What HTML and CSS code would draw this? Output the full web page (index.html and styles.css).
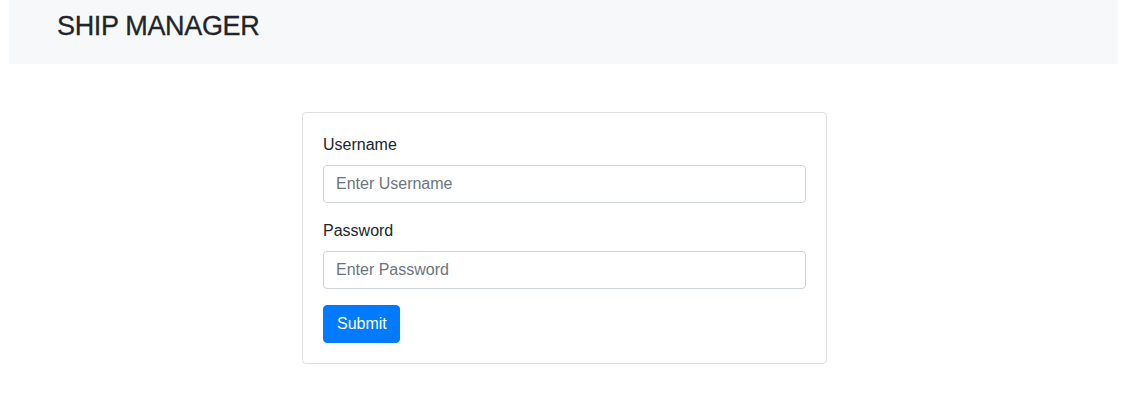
FILE: index.html
```html
<!DOCTYPE html>
<html lang="en">
<head>
<meta charset="utf-8">
<title>Ship Manager</title>
<link rel="stylesheet" href="styles.css">
</head>
<body>
<header class="navbar">
  <h1 class="brand">SHIP MANAGER</h1>
</header>
<main class="content">
  <form class="card">
    <div class="form-group">
      <label class="label" for="username">Username</label>
      <input class="input" id="username" type="text" placeholder="Enter Username">
    </div>
    <div class="form-group">
      <label class="label" for="password">Password</label>
      <input class="input" id="password" type="password" placeholder="Enter Password">
    </div>
    <button class="btn" type="button">Submit</button>
  </form>
</main>
</body>
</html>
```

FILE: styles.css
```css
* { box-sizing: border-box; }
html, body { margin: 0; padding: 0; background: #fff; }
body {
  font-family: "Liberation Sans", Arial, sans-serif;
  color: #212529;
  font-size: 16px;
  line-height: 24px;
}
.navbar {
  margin: 0 16px 0 9px;
  height: 64px;
  background: #f7f8fa;
  padding: 11px 48px 0;
}
.brand {
  margin: 0;
  font-size: 27px;
  line-height: 30px;
  font-weight: 400;
  letter-spacing: -0.35px;
  -webkit-text-stroke: 0.3px #212529;
}
.content {
  margin: 48px 15px 0 10px;
  display: flex;
  justify-content: center;
}
.card {
  width: 525px;
  border: 1px solid rgba(0,0,0,.125);
  border-radius: 4px;
  padding: 20px;
  display: flex;
  flex-direction: column;
  align-items: flex-start;
}
.form-group {
  width: 100%;
  display: flex;
  flex-direction: column;
  margin-bottom: 16px;
}
.label {
  margin-bottom: 8px;
  line-height: 24px;
}
.input {
  height: 38px;
  width: 100%;
  border: 1px solid #ced4da;
  border-radius: 4px;
  padding: 6px 12px;
  font: inherit;
  font-size: 16px;
  color: #495057;
  background: #fff;
}
.input::placeholder { color: #6c757d; opacity: 1; }
.btn {
  height: 38px;
  padding: 6px 12px 6px 13px;
  border: 1px solid #007bff;
  background: #007bff;
  color: #fff;
  border-radius: 4px;
  font: inherit;
  font-size: 16px;
  line-height: 24px;
}
```
